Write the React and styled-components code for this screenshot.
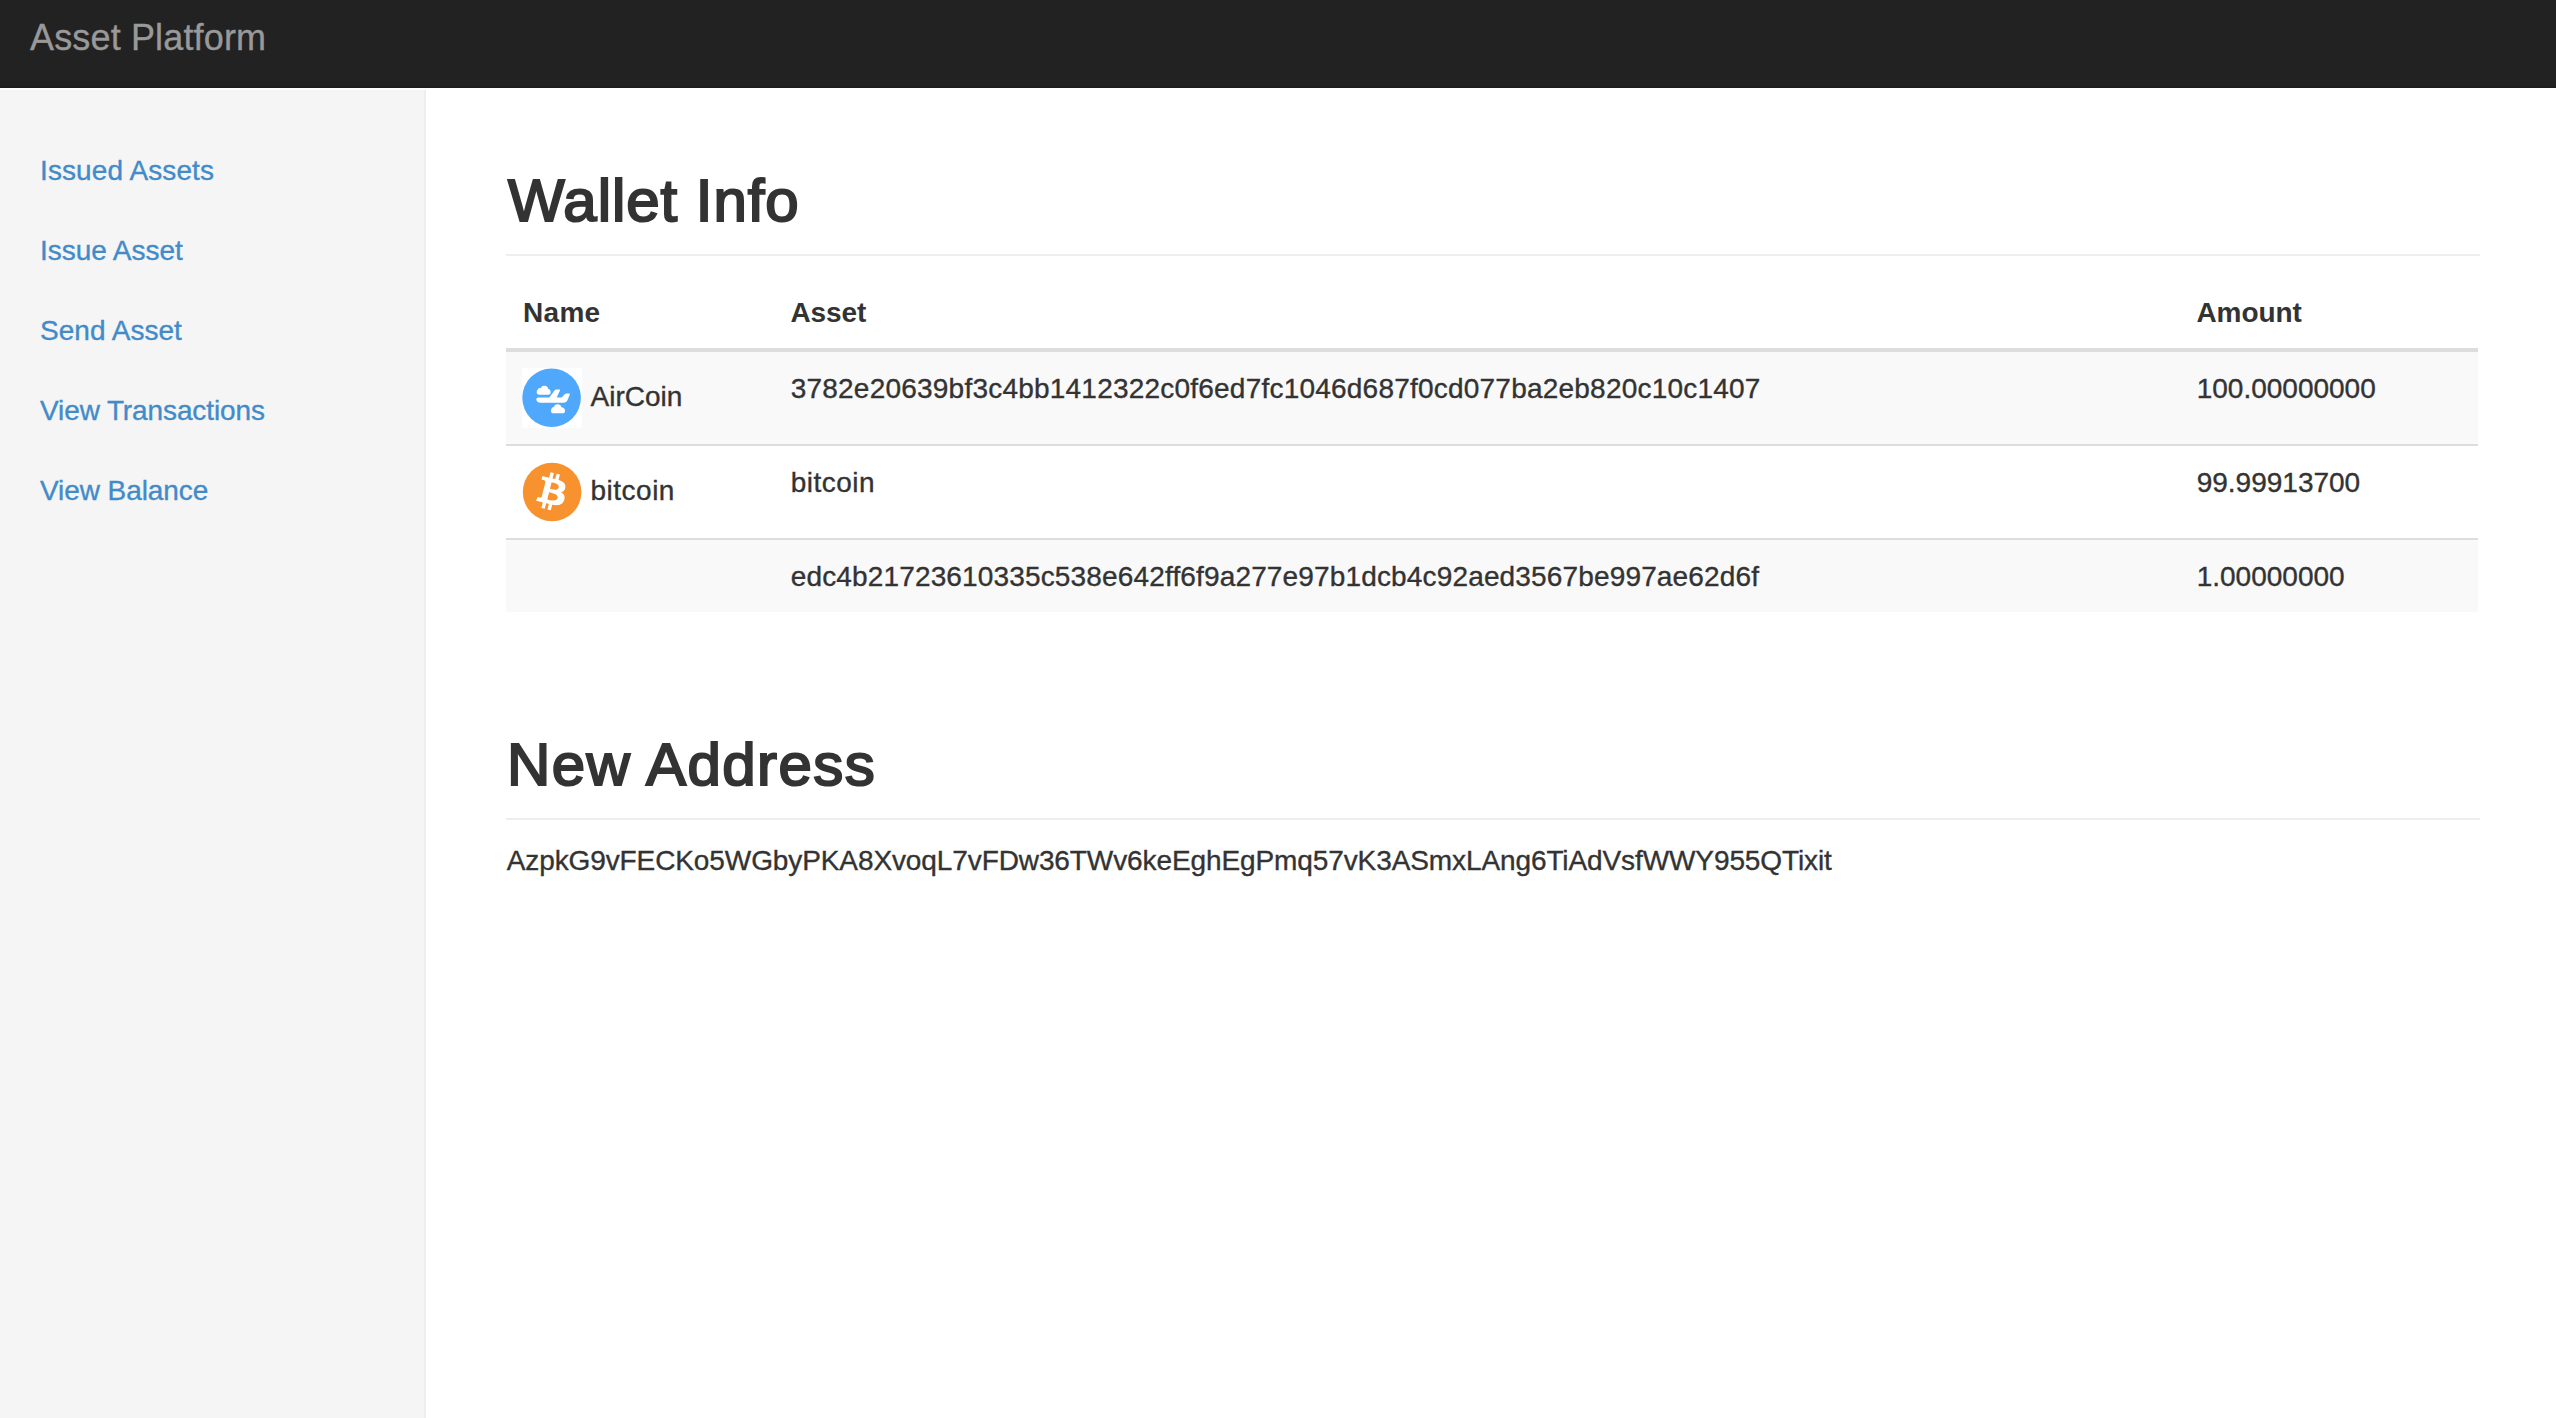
import React from "react";
import styled, { createGlobalStyle } from "styled-components";

const GlobalStyle = createGlobalStyle`
  *, *::before, *::after { box-sizing: border-box; }
  html, body, #root { height: 100%; }
  body {
    margin: 0;
    overflow: hidden;
    background: #fff;
    color: #333;
    font: 28px/40px "Liberation Sans", Arial, sans-serif;
    -webkit-text-stroke-width: 0.35px;
  }
`;

const Page = styled.div`
  display: flex;
  flex-direction: column;
  height: 100vh;
`;

const Navbar = styled.header`
  flex: none;
  height: 88px;
  margin-bottom: 2px;
  padding: 17px 30px 0;
  background: #222;
  border-bottom: 2px solid #1e1e1e;
`;

const Brand = styled.a`
  display: block;
  color: #999;
  font-size: 36px;
  line-height: 41px;
  letter-spacing: 0.15px;
  text-decoration: none;
`;

const Body = styled.div`
  display: flex;
  flex: 1;
  min-height: 0;
`;

const Sidebar = styled.nav`
  flex: none;
  width: 426px;
  padding-top: 40px;
  background: #f5f5f5;
  border-right: 2px solid #eee;
`;

const NavLink = styled.a`
  display: block;
  padding: 21px 40px 19px;
  color: #428bca;
  letter-spacing: ${(p) => p.$tracking}px;
  text-decoration: none;
`;

const Main = styled.main`
  flex: 1;
  padding: 77px 76px 0 80px;
`;

const Section = styled.section`
  & + & { margin-top: 119px; }
`;

const Title = styled.h2`
  margin: 0;
  padding: 0 0 20px ${(p) => p.$inset}px;
  border-bottom: 2px solid #eee;
  font-size: 60px;
  line-height: 67px;
  font-weight: 400;
  letter-spacing: ${(p) => p.$tracking}px;
  -webkit-text-stroke: 2.1px #333;
`;

const Table = styled.table`
  width: 1972px;
  margin-top: 20px;
  border-collapse: separate;
  border-spacing: 0;
  table-layout: fixed;
`;

const HeadCell = styled.th`
  width: ${(p) => p.$width}px;
  padding: 17px 16px 15px;
  padding-left: ${(p) => p.$inset || 16.5}px;
  border-bottom: 4px solid #ddd;
  text-align: left;
  font-weight: 700;
  letter-spacing: ${(p) => p.$tracking}px;
  -webkit-text-stroke-width: 0;
`;

const Row = styled.tr`
  &:nth-child(odd) { background: #f9f9f9; }
  & + & > td { border-top: 2px solid #ddd; }
`;

const Cell = styled.td`
  padding: 17px 16px 15px 16.7px;
  vertical-align: top;
  white-space: nowrap;
  letter-spacing: ${(p) => p.$tracking || 0}px;
`;

const NameCell = styled(Cell)`
  padding: 16px;
`;

const Coin = styled.div`
  display: flex;
  gap: 8.5px;
  height: 60px;
`;

const CoinIcon = styled.svg`
  flex: none;
  width: 60px;
  height: 60px;
  background: #fff;
`;

const CoinName = styled.span`
  padding-top: 9px;
  letter-spacing: ${(p) => p.$tracking}px;
`;

const Address = styled.p`
  margin: 21px 0 0;
  padding-left: 0.7px;
  white-space: nowrap;
  letter-spacing: -0.1px;
`;

function AirCoinIcon() {
  return (
    <CoinIcon viewBox="0 0 60 60">
      <circle cx="29.6" cy="29.7" r="29.3" fill="#4fa8fb" />
      <g fill="#fff">
        <rect x="14.7" y="21.5" width="14" height="5.2" rx="2.6" />
        <circle cx="22.4" cy="21.5" r="3.8" />
        <circle cx="18" cy="22.6" r="2.5" />
        <circle cx="26" cy="22.7" r="1.9" />
        <path d="M16.4 29.5h10.9l5.2-7q.7-1.1 1.9-1.1h3.2q.9 0 .5.9l-3.4 7.2h5l3-3.2q.7-.8 1.7-.8h2.7q1 0 .7.9l-2.1 5.3q-1.1 3-4.6 3H18.6q-4-.1-4.3-3.2-.1-2 2.1-2z" />
        <rect x="29" y="40.1" width="14" height="5.2" rx="2.6" />
        <circle cx="35.6" cy="40.1" r="3.8" />
        <circle cx="32" cy="41.3" r="2.4" />
        <circle cx="39.8" cy="41.2" r="2" />
      </g>
    </CoinIcon>
  );
}

function BitcoinIcon() {
  return (
    <CoinIcon viewBox="0 0 60 60">
      <circle cx="30.1" cy="30" r="29.3" fill="#f7922f" />
      <path
        fill="#fff"
        transform="translate(29.3 29.3) scale(1.95 1.9) translate(-16 -16)"
        d="M23.189 14.02c.314-2.096-1.283-3.223-3.465-3.975l.708-2.84-1.728-.43-.69 2.765c-.454-.114-.92-.22-1.385-.326l.695-2.783L15.596 6l-.708 2.839c-.376-.086-.746-.17-1.104-.26l.002-.009-2.384-.595-.46 1.846s1.283.294 1.256.312c.7.175.826.638.805 1.006l-.806 3.235c.048.012.11.03.18.057l-.183-.045-1.13 4.532c-.086.212-.303.531-.793.41.018.025-1.256-.313-1.256-.313l-.858 1.978 2.25.561c.418.105.828.215 1.231.318l-.715 2.872 1.727.43.708-2.84c.472.127.93.245 1.378.357l-.706 2.828 1.728.43.715-2.866c2.948.558 5.164.333 6.097-2.333.752-2.146-.037-3.385-1.588-4.192 1.13-.26 1.98-1.003 2.207-2.538zm-3.95 5.538c-.533 2.147-4.148.986-5.32.695l.95-3.805c1.172.293 4.929.872 4.37 3.11zm.535-5.569c-.487 1.953-3.495.96-4.47.717l.86-3.45c.975.243 4.118.696 3.61 2.733z"
      />
    </CoinIcon>
  );
}

const links = [
  { label: "Issued Assets", tracking: 0.1 },
  { label: "Issue Asset", tracking: -0.05 },
  { label: "Send Asset", tracking: 0.02 },
  { label: "View Transactions", tracking: -0.11 },
  { label: "View Balance", tracking: -0.08 },
];

const assets = [
  {
    name: "AirCoin",
    Icon: AirCoinIcon,
    nameTracking: 0,
    asset: "3782e20639bf3c4bb1412322c0f6ed7fc1046d687f0cd077ba2eb820c10c1407",
    tracking: 0.218,
    amount: "100.00000000",
  },
  {
    name: "bitcoin",
    Icon: BitcoinIcon,
    nameTracking: 0.5,
    asset: "bitcoin",
    tracking: 0.5,
    amount: "99.99913700",
  },
  {
    asset: "edc4b21723610335c538e642ff6f9a277e97b1dcb4c92aed3567be997ae62d6f",
    tracking: 0.153,
    amount: "1.00000000",
  },
];

export default function App() {
  return (
    <Page>
      <GlobalStyle />
      <Navbar>
        <Brand>Asset Platform</Brand>
      </Navbar>
      <Body>
        <Sidebar>
          {links.map((link) => (
            <NavLink key={link.label} $tracking={link.tracking}>
              {link.label}
            </NavLink>
          ))}
        </Sidebar>
        <Main>
          <Section>
            <Title $inset={2} $tracking={0.95}>Wallet Info</Title>
            <Table>
              <thead>
                <tr>
                  <HeadCell $width={268} $inset={17} $tracking={0.3}>Name</HeadCell>
                  <HeadCell $width={1406} $tracking={-0.1}>Asset</HeadCell>
                  <HeadCell $width={298} $tracking={-0.1}>Amount</HeadCell>
                </tr>
              </thead>
              <tbody>
                {assets.map(({ name, Icon, nameTracking, asset, tracking, amount }) => (
                  <Row key={asset}>
                    <NameCell>
                      {name && (
                        <Coin>
                          <Icon />
                          <CoinName $tracking={nameTracking}>{name}</CoinName>
                        </Coin>
                      )}
                    </NameCell>
                    <Cell $tracking={tracking}>{asset}</Cell>
                    <Cell>{amount}</Cell>
                  </Row>
                ))}
              </tbody>
            </Table>
          </Section>
          <Section>
            <Title $inset={1} $tracking={1.42}>New Address</Title>
            <Address>
              AzpkG9vFECKo5WGbyPKA8XvoqL7vFDw36TWv6keEghEgPmq57vK3ASmxLAng6TiAdVsfWWY955QTixit
            </Address>
          </Section>
        </Main>
      </Body>
    </Page>
  );
}
